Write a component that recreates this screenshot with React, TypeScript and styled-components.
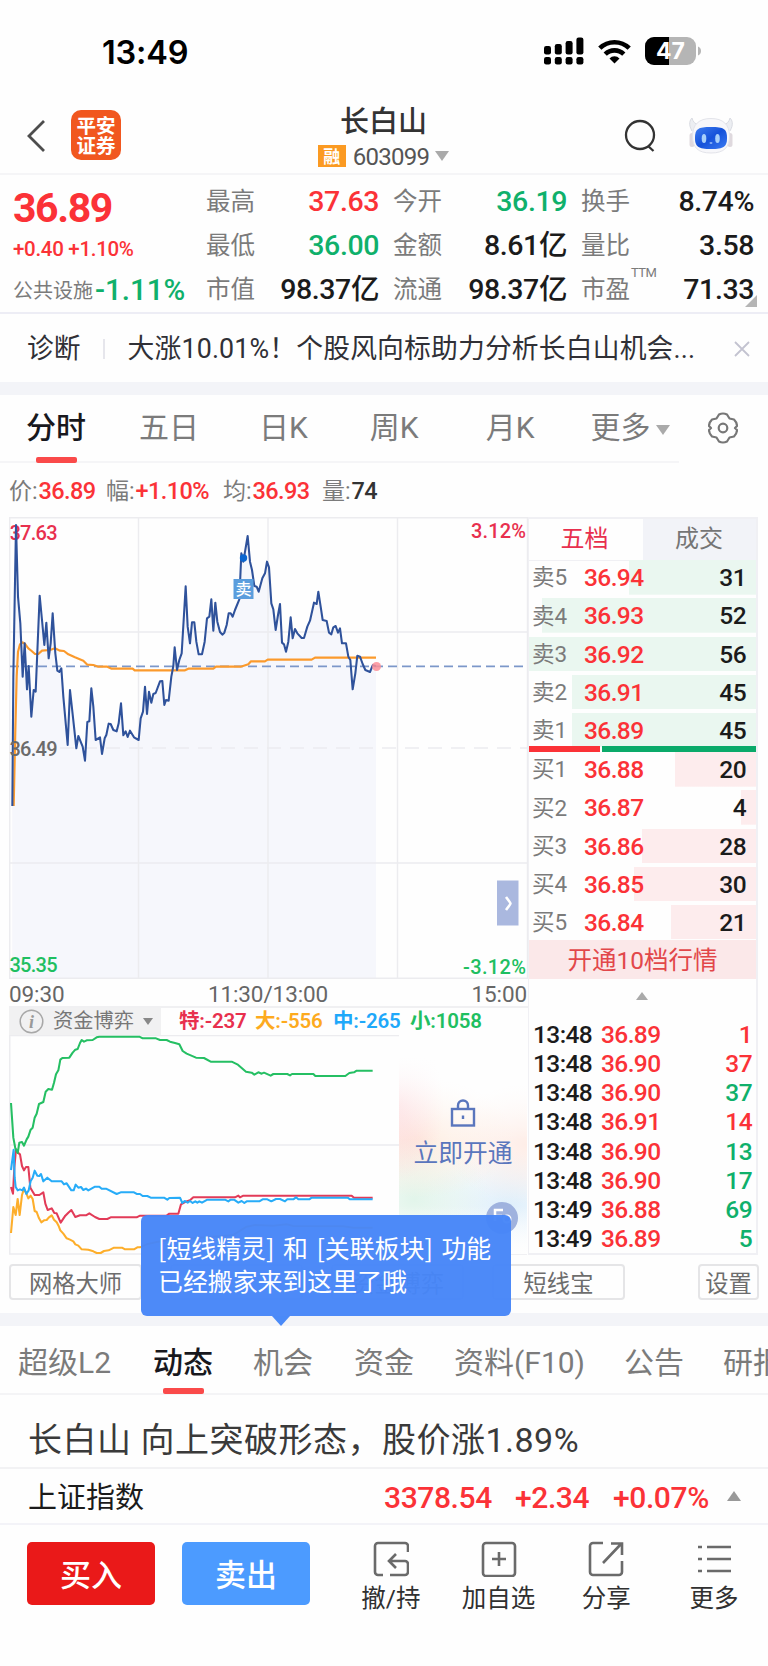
import React from "react";
import styled, { createGlobalStyle } from "styled-components";

const CJK = '"Noto Sans CJK SC"';
const RED = "#fb3237";
const GREEN = "#0fb06b";
const GREY = "#7b7b7b";
const INK = "#1b1b1b";
const LINE = "#f0f0f4";
const CRIMSON = "#e8304e";

const GlobalStyle = createGlobalStyle`
  *, *::before, *::after { box-sizing: border-box; }
  body { margin: 0; background: #fefefe; }
`;

const Screen = styled.div`
  width: 768px;
  height: 1666px;
  overflow: hidden;
  background: #fefefe;
  color: ${INK};
  font-family: Roboto, ${CJK}, sans-serif;
  line-height: 1.2;
  white-space: nowrap;
  display: flex;
  flex-direction: column;
`;

const StatusBar = styled.div`
  flex: none;
  height: 102px;
  padding: 0 66px 0 102px;
  display: flex;
  justify-content: space-between;
  align-items: center;
`;
const Clock = styled.div`
  font: 600 32.5px/1 Inter, sans-serif;
  letter-spacing: -0.2px;
  color: #000;
  padding-top: 5px;
`;
const StatusIcons = styled.div`
  display: flex;
  align-items: center;
  gap: 14px;
`;

const Header = styled.header`
  flex: none;
  height: 73px;
  display: grid;
  grid-template-columns: 24px 50px 1fr 64px 46px;
  padding: 0 34px 0 24px;
  align-items: start;
  border-bottom: 2px solid #f5f5f7;
`;
const Back = styled.svg`
  margin-top: 17px;
`;
const Logo = styled.div`
  margin: 8px 0 0 23px;
  width: 50px;
  height: 50px;
  border-radius: 10px;
  background: #f1571f;
  color: #fff;
  font: 700 19.5px/20px ${CJK}, sans-serif;
  display: flex;
  flex-direction: column;
  align-items: center;
  justify-content: center;
`;
const TitleBlock = styled.div`
  display: flex;
  flex-direction: column;
  align-items: center;
  padding-left: 45px;
`;
const Title = styled.div`
  font: 500 29px/36px ${CJK}, sans-serif;
  margin-top: -1px;
  color: #333;
`;
const CodeLine = styled.div`
  display: flex;
  align-items: center;
  height: 22px;
  margin-top: 8px;
  font-size: 24px;
  line-height: 32px;
  color: #555;
  letter-spacing: -0.7px;
`;
const CodeDigits = styled.span`
  padding-top: 2px;
  margin-right: 6px;
`;
const MarginBadge = styled.span`
  width: 28px;
  height: 22px;
  margin-right: 7px;
  background: #fb9a22;
  color: #fff;
  font: 700 17px/21px ${CJK}, sans-serif;
  letter-spacing: 0;
  text-align: center;
`;
const Caret = styled.span<{ $size?: number; $up?: boolean; $color?: string }>`
  display: inline-block;
  border: ${(p) => p.$size ?? 7}px solid transparent;
  border-${(p) => (p.$up ? "bottom" : "top")}: ${(p) => (p.$size ?? 7) * 1.45}px solid ${(p) => p.$color ?? "#aaa"};
  border-${(p) => (p.$up ? "top" : "bottom")}: 0;
`;
const PeriodCaret = styled(Caret)`
  vertical-align: 3px;
  margin-left: 6px;
`;
const PickerCaret = styled(Caret)`
  margin-left: 9px;
`;

const Quote = styled.section`
  flex: none;
  height: 139px;
  display: grid;
  grid-template-columns: 193px 173px 14px 174px 14px 173px;
  padding-left: 13px;
  border-bottom: 2px solid #ededf5;
  position: relative;
`;
const PriceBlock = styled.div`
  display: flex;
  flex-direction: column;
  color: ${RED};
`;
const LastPrice = styled.div`
  font-size: 41px;
  font-weight: 700;
  line-height: 48px;
  letter-spacing: -1.4px;
  margin-top: 9px;
`;
const Change = styled.div`
  font-size: 20.5px;
  font-weight: 500;
  line-height: 24px;
  letter-spacing: -0.3px;
  margin-top: 5px;
`;
const Sector = styled.div`
  display: flex;
  align-items: center;
  height: 30px;
  margin-top: 15px;
  color: ${GREY};
  font-size: 20px;
`;
const SectorPct = styled.span`
  color: ${GREEN};
  font-size: 29.5px;
  font-weight: 500;
  margin-left: 2px;
`;
const StatColumn = styled.div`
  display: grid;
  grid-template-rows: 44px 44px 44px;
  padding-top: 5px;
`;
const Spacer = styled.span``;
const Stat = styled.div`
  display: flex;
  align-items: center;
  justify-content: space-between;
`;
const StatLabel = styled.span`
  font-size: 24.5px;
  color: ${GREY};
  position: relative;
`;
const Superscript = styled.sup`
  position: absolute;
  left: 50px;
  top: -10px;
  font-size: 13px;
  letter-spacing: -0.5px;
  line-height: 16px;
`;
const StatValue = styled.span<{ $color?: string }>`
  font-size: 28.5px;
  font-weight: 500;
  letter-spacing: -0.4px;
  color: ${(p) => p.$color ?? INK};
`;
const Corner = styled.i`
  position: absolute;
  right: 11px;
  bottom: 5px;
  border: 6px solid transparent;
  border-right-color: #b5b5b5;
  border-bottom-color: #b5b5b5;
`;

const Diagnosis = styled.section`
  flex: none;
  height: 68px;
  padding: 2px 18px 0 27px;
  display: flex;
  align-items: center;
  font-size: 26.8px;
  color: #303036;
`;
const Divider = styled.i`
  width: 2px;
  height: 20px;
  background: #e6e6ec;
  margin: 0 23px 0 22px;
`;
const DiagnosisText = styled.span`
  flex: 1;
  letter-spacing: 0.15px;
`;

const Band = styled.div`
  flex: none;
  height: 13px;
  background: #f3f4f8;
`;

const PeriodTabs = styled.nav`
  flex: none;
  height: 68px;
  width: 679px;
  display: flex;
  border-bottom: 2px solid #f5f5f7;
`;
const PeriodBar = styled.div`
  display: flex;
`;
const Tab = styled.div<{ $left: number; $active?: boolean }>`
  position: relative;
  margin-left: ${(p) => p.$left}px;
  font-size: 30px;
  line-height: 66px;
  color: ${(p) => (p.$active ? "#18181d" : GREY)};
  font-weight: ${(p) => (p.$active ? 500 : 400)};
  &::after {
    content: "";
    display: ${(p) => (p.$active ? "block" : "none")};
    position: absolute;
    left: 50%;
    margin-left: -20px;
    bottom: -2px;
    width: 41px;
    height: 6px;
    border-radius: 2px;
    background: #fa4a4a;
  }
`;
const Gear = styled.svg`
  margin: 17px 0 0 29px;
`;

const Readout = styled.div`
  flex: none;
  height: 54px;
  display: flex;
  align-items: center;
  padding: 3px 0 0 9px;
  font-size: 23px;
  color: ${GREY};
`;
const ReadoutItem = styled.span<{ $width: number }>`
  width: ${(p) => p.$width}px;
`;
const ReadoutValue = styled.b<{ $color?: string }>`
  font-weight: 500;
  font-size: 23.5px;
  letter-spacing: -0.6px;
  margin-left: 1px;
  color: ${(p) => p.$color ?? RED};
`;

const Market = styled.main`
  flex: none;
  height: 737px;
  display: grid;
  grid-template-columns: 519px 230px;
  padding-left: 9px;
`;
const ChartColumn = styled.div`
  display: flex;
  flex-direction: column;
`;
const ChartSvg = styled.svg`
  display: block;
  flex: none;
`;
const TimeAxis = styled.div`
  height: 27px;
  display: flex;
  justify-content: space-between;
  align-items: center;
  font-size: 22.5px;
  letter-spacing: -0.1px;
  padding: 3px 1px 0 0;
  color: #666;
`;
const FundHeader = styled.div`
  height: 29px;
  display: flex;
  align-items: flex-start;
  line-height: 26px;
  border-top: 2px solid #f0f0f2;
`;
const FundPicker = styled.div`
  width: 152px;
  height: 27px;
  display: flex;
  align-items: center;
  padding: 0 0 1px 10px;
  background: #f1f1f2;
  color: #777;
  font-size: 20.3px;
`;
const Info = styled.svg`
  margin-right: 9px;
`;
const FundValue = styled.span<{ $color: string; $width: number; $left?: number }>`
  width: ${(p) => p.$width}px;
  margin-left: ${(p) => p.$left ?? 0}px;
  color: ${(p) => p.$color};
  font-size: 20.5px;
  font-weight: 600;
  letter-spacing: -0.2px;
`;
const FundChart = styled.div`
  position: relative;
  height: 220px;
`;
const LockPanel = styled.div`
  position: absolute;
  left: 390px;
  top: 0;
  width: 128px;
  height: 219px;
  display: flex;
  flex-direction: column;
  align-items: center;
  padding-top: 64px;
  gap: 12px;
  color: #5a76bd;
  font-size: 24.7px;
  background:
    linear-gradient(180deg, #fefefe 10%, rgba(254,254,254,0) 48%, rgba(254,254,254,0) 78%, #fefefe 100%),
    radial-gradient(ellipse 45px 75px at 0 32%, rgba(253,205,212,.65), rgba(253,205,212,0)),
    radial-gradient(ellipse 95px 60px at 15% 47%, rgba(254,229,212,.7), rgba(254,229,212,0)),
    radial-gradient(ellipse 80px 60px at 100% 50%, rgba(254,226,216,.6), rgba(254,226,216,0)),
    radial-gradient(ellipse 75px 65px at 12% 75%, rgba(214,241,226,.7), rgba(214,241,226,0)),
    radial-gradient(ellipse 90px 55px at 85% 78%, rgba(212,234,250,.75), rgba(212,234,250,0)),
    #fefefe;
`;
const FloatBadge = styled.div`
  position: absolute;
  left: 477px;
  top: 167px;
  width: 32px;
  height: 32px;
`;

const Book = styled.aside`
  border: solid ${LINE};
  border-width: 2px 2px 2px 1px;
  display: flex;
  flex-direction: column;
`;
const BookTabs = styled.div`
  height: 37.5px;
  display: grid;
  grid-template-columns: 114px 1fr;
`;
const BookTab = styled.div<{ $active?: boolean }>`
  text-align: center;
  font-size: 24px;
  line-height: 41px;
  padding-right: ${(p) => (p.$active ? 3 : 1)}px;
  border-bottom: 1px solid ${LINE};
  color: ${(p) => (p.$active ? CRIMSON : "#757575")};
  background: ${(p) => (p.$active ? "transparent" : "#f2f3f8")};
`;
const Level = styled.div<{ $bar: number; $tint: string }>`
  height: 34.4px;
  margin-top: 3.8px;
  display: grid;
  grid-template-columns: 52px 1fr auto;
  align-items: center;
  padding: 1px 10px 0 3px;
  font-size: 22.5px;
  color: ${GREY};
  background: linear-gradient(${(p) => p.$tint}, ${(p) => p.$tint}) right / ${(p) => p.$bar}px 100% no-repeat;
`;
const Figure = styled.span<{ $color?: string }>`
  font-size: 24.5px;
  font-weight: 500;
  letter-spacing: -0.6px;
  color: ${(p) => p.$color ?? INK};
`;
const RatioBar = styled.div`
  height: 6px;
  margin: -1px 0 -4px;
  display: grid;
  grid-template-columns: 71px 1fr;
  gap: 2px;
  z-index: 1;
  &::before { content: ""; background: ${RED}; }
  &::after { content: ""; background: #0aaa6a; }
`;
const DepthButton = styled.div`
  height: 39px;
  margin-top: 1px;
  background: #fbe8e9;
  color: #e2474a;
  text-align: center;
  font-size: 24.5px;
  line-height: 41px;
`;
const Collapse = styled.div`
  height: 40.5px;
  display: flex;
  justify-content: center;
  align-items: flex-start;
  padding: 13px 2px 0 0;
`;
const Trade = styled.div`
  height: 29.2px;
  display: grid;
  grid-template-columns: 68px 1fr auto;
  align-items: center;
  padding: 0 4px 0 4px;
`;

const ToolRow = styled.div`
  flex: none;
  height: 59px;
  display: flex;
  gap: 28px;
  padding: 10px 9px 0;
  position: relative;
`;
const ToolButton = styled.div<{ $width?: number; $last?: boolean }>`
  width: ${(p) => p.$width ?? 133}px;
  height: 36px;
  border: 2px solid #e5e5e7;
  border-radius: 4px;
  text-align: center;
  color: #6d6d6d;
  font-size: 23.3px;
  line-height: 37px;
  margin-left: ${(p) => (p.$last ? "auto" : 0)};
`;
const Tooltip = styled.div`
  position: absolute;
  left: 141px;
  top: -39px;
  width: 370px;
  height: 101px;
  border-radius: 6px;
  background: rgba(70, 134, 248, 0.965);
  color: #fff;
  font-family: ${CJK}, sans-serif;
  font-size: 24.9px;
  line-height: 33px;
  word-spacing: 3px;
  padding: 16px 0 0 17px;
  z-index: 2;
  &::after {
    content: "";
    position: absolute;
    left: 131px;
    top: 101px;
    border: 9px solid transparent;
    border-top: 10px solid #4a8af8;
    border-bottom: 0;
  }
`;

const SectionTabs = styled.nav`
  flex: none;
  height: 69px;
  display: flex;
  border-bottom: 2px solid #f4f4f6;
`;
const SectionTab = styled(Tab)`
  line-height: 73px;
  &::after { bottom: -1px; }
`;
const News = styled.div`
  flex: none;
  height: 74px;
  padding-left: 28px;
  font-size: 34px;
  line-height: 90px;
  letter-spacing: 0.5px;
  word-spacing: 0;
  color: #3a3a3a;
  border-bottom: 2px solid #f2f2f4;
`;
const IndexRow = styled.div`
  flex: none;
  height: 56px;
  display: flex;
  align-items: center;
  padding: 3px 27px 0 28px;
  font-size: 29px;
  border-bottom: 2px solid #f3f3f8;
`;
const IndexName = styled.span`
  flex: 1;
  padding-top: 1px;
`;
const IndexValue = styled.span<{ $width: number }>`
  width: ${(p) => p.$width}px;
  color: ${RED};
  font-size: 30px;
  font-weight: 500;
  letter-spacing: -0.4px;
`;
const IndexCaret = styled(Caret)`
  margin-bottom: 4px;
`;

const ActionBar = styled.footer`
  flex: 1;
  display: flex;
  padding: 17px 0 0 27px;
`;
const OrderButton = styled.div<{ $color: string }>`
  width: 128px;
  height: 63px;
  margin-right: 27px;
  border-radius: 5px;
  background: ${(p) => p.$color};
  color: #fff;
  font-size: 31px;
  font-weight: 500;
  line-height: 68px;
  text-align: center;
`;
const Actions = styled.div`
  display: grid;
  grid-template-columns: repeat(4, 107.7px);
`;
const Action = styled.div`
  display: flex;
  flex-direction: column;
  align-items: center;
  font-size: 24.5px;
  line-height: 38px;
  gap: 3px;
  color: #303030;
  & > svg { margin-top: -1px; }
`;
const SearchIcon = styled.svg`
  margin-top: 16px;
`;
const RobotIcon = styled.svg`
  margin-top: 13px;
`;

const toPath = (s: string) => "M" + s.split(" ").join("L");

const PRICE =
  "37,888 40,500 48,45 54,260 61,340 68,500 74,400 81,538 86,468 94,620 101,540 107,545 119,257 126,330 133,405 139,338 146,445 152,400 158,310 166,430 172,482 178,486 184,475 190,560 203,705 210,540 222,650 229,715 235,678 248,710 255,752 262,636 268,634 274,535 280,590 287,690 300,682 306,732 314,685 319,675 326,641 332,642 340,660 350,664 356,640 363,580 370,676 377,664 383,681 390,662 402,682 416,690 422,625 429,605 435,530 441,612 447,545 454,578 460,552 467,549 480,514 487,513 493,585 498,570 506,572 514,500 520,468 524,412 531,480 538,450 545,430 551,330 557,229 563,350 570,400 576,337 583,337 589,395 596,433 606,433 614,395 621,325 628,320 634,268 640,362 646,278 652,335 660,366 667,374 673,368 680,345 686,310 692,310 698,320 705,300 718,268 724,130 730,155 743,78 750,155 756,180 763,228 770,230 776,245 787,205 795,190 801,155 807,172 814,280 820,298 827,360 834,315 840,282 846,398 852,403 858,425 865,395 872,322 878,385 885,357 892,370 905,384 912,384 922,350 930,332 942,278 950,282 955,245 962,290 968,330 980,333 987,368 994,373 1000,352 1007,348 1014,368 1020,355 1026,400 1038,400 1045,440 1051,450 1058,538 1066,490 1072,437 1080,440 1088,462 1096,480 1110,486 1118,466 1128,468";
const AVERAGE =
  "41,888 46,660 50,500 54,425 60,403 68,397 75,402 85,415 95,423 105,432 115,432 126,422 150,420 165,415 180,422 192,423 205,433 225,442 250,452 262,464 280,465 295,470 322,470 335,476 398,476 404,481 555,481 565,476 640,476 648,470 722,470 745,463 753,454 795,454 803,449 935,449 945,443 1128,443";

const SMALL =
  "33,246 40,350 46,382 53,396 58,365 66,363 72,374 80,355 85,347 92,326 98,320 104,290 110,278 117,249 130,243 137,212 145,204 156,206 162,185 168,160 175,148 181,116 187,111 208,110 218,95 226,86 233,84 240,66 245,57 252,62 260,58 278,57 290,49 298,47 418,47 428,52 468,52 480,57 500,57 510,62 525,66 538,70 548,90 560,98 588,110 612,111 632,122 695,122 712,130 738,152 755,155 763,161 775,154 785,158 792,155 812,164 820,159 862,159 870,163 876,159 940,159 946,165 1036,165 1048,156 1062,154 1070,149 1118,149";
const EXTRA =
  "33,498 39,518 43,440 48,385 56,397 60,400 66,435 72,448 78,438 85,438 91,500 104,522 118,522 130,514 136,548 143,567 155,562 163,576 170,577 182,605 196,584 205,575 214,567 226,588 240,583 258,583 268,577 285,588 298,594 322,594 332,589 410,589 420,584 500,584 508,578 535,578 543,550 555,543 570,538 580,529 705,529 715,524 720,529 730,524 1055,524 1062,530 1118,530";
const MEDIUM =
  "33,447 41,386 44,470 47,498 53,508 60,505 67,508 72,500 79,519 86,508 92,480 98,470 104,449 112,464 118,465 123,459 130,481 142,470 155,481 185,481 192,490 200,487 214,508 221,508 227,491 235,500 243,498 250,507 258,503 265,508 285,497 298,497 305,503 318,503 350,519 362,514 402,514 410,519 420,519 428,525 442,525 452,530 492,530 502,536 508,531 540,530 547,546 554,540 563,545 570,540 578,546 586,541 592,545 598,541 606,545 622,536 675,536 685,541 692,536 702,536 715,545 725,540 733,546 740,541 778,541 788,535 802,535 814,541 828,534 840,534 855,541 862,535 880,535 888,529 895,535 928,535 935,530 1043,530 1050,535 1118,535";
const LARGE =
  "33,636 40,558 47,582 53,534 59,582 66,522 72,503 78,515 85,532 92,524 98,534 104,570 110,573 117,592 124,604 132,598 140,597 146,590 155,583 162,596 170,604 176,615 181,628 190,638 200,652 210,656 220,661 226,670 235,674 245,685 265,686 280,691 290,696 302,696 312,690 326,688 342,680 366,680 375,685 402,685 412,679 420,679 440,670 470,663 520,655 600,650 700,642 740,617 765,612 820,614 860,610 880,615 1030,616 1060,620 1118,620";

const SELLS = [
  ["卖5", "36.94", "31", 127],
  ["卖4", "36.93", "52", 214],
  ["卖3", "36.92", "56", 229],
  ["卖2", "36.91", "45", 184],
  ["卖1", "36.89", "45", 184],
] as const;
const BUYS = [
  ["买1", "36.88", "20", 81],
  ["买2", "36.87", "4", 15],
  ["买3", "36.86", "28", 114],
  ["买4", "36.85", "30", 122],
  ["买5", "36.84", "21", 85],
] as const;
const TRADES = [
  ["13:48", "36.89", "1", RED],
  ["13:48", "36.90", "37", RED],
  ["13:48", "36.90", "37", GREEN],
  ["13:48", "36.91", "14", RED],
  ["13:48", "36.90", "13", GREEN],
  ["13:48", "36.90", "17", GREEN],
  ["13:49", "36.88", "69", GREEN],
  ["13:49", "36.89", "5", GREEN],
] as const;
const STATS: [string, string, string?][][] = [
  [["最高", "37.63", RED], ["最低", "36.00", GREEN], ["市值", "98.37亿"]],
  [["今开", "36.19", GREEN], ["金额", "8.61亿"], ["流通", "98.37亿"]],
  [["换手", "8.74%"], ["量比", "3.58"], ["市盈", "71.33"]],
];

function StatusGlyphs() {
  return (
    <StatusIcons>
      <svg width="40" height="28" viewBox="0 0 40 28">
        {[9, 7, 4, 0.5].map((y, i) => (
          <g key={i}>
            <rect x={i * 10.8} y={y} width="7" height={17.5 - y} rx="2.2" />
            <rect x={i * 10.8} y="20" width="7" height="7.5" rx="2.2" />
          </g>
        ))}
      </svg>
      <svg width="33" height="25" viewBox="0 0 33 25" fill="none" stroke="#000" strokeWidth="4.6">
        <path d="M1.8 9.2a21 21 0 0 1 29.4 0" />
        <path d="M7.2 15.2a13.2 13.2 0 0 1 18.6 0" />
        <path d="M16.5 24.6l-5-5.2a7 7 0 0 1 10 0z" fill="#000" stroke="none" />
      </svg>
      <svg width="57" height="28" viewBox="0 0 57 28">
        <clipPath id="cell"><rect width="51" height="28" rx="9" /></clipPath>
        <g clipPath="url(#cell)">
          <rect width="51" height="28" fill="#b5b5b5" />
          <rect width="24" height="28" />
        </g>
        <path d="M53 9.5c4 1 4 8 0 9z" fill="#b5b5b5" />
        <text x="25.5" y="22" textAnchor="middle" fill="#fff" fontFamily="Inter, sans-serif" fontWeight="700" fontSize="23">47</text>
      </svg>
    </StatusIcons>
  );
}

function Robot() {
  return (
    <RobotIcon width="46" height="40" viewBox="0 0 46 40">
      <defs>
        <linearGradient id="visor" x1="0" y1="0" x2="1" y2="1">
          <stop offset="0" stopColor="#3f7df0" />
          <stop offset=".5" stopColor="#1552da" />
          <stop offset="1" stopColor="#3b7bf2" />
        </linearGradient>
      </defs>
      <path d="M4 16C0 9 2 5 4 3c1 4 3 6 7 7M42 16c4-7 2-11 0-13-1 4-3 6-7 7" fill="#eceef2" stroke="#d9dbe2" />
      <rect x="1.5" y="18" width="5" height="14" rx="2.5" fill="#dfd9de" />
      <rect x="39.5" y="18" width="5" height="14" rx="2.5" fill="#dfd9de" />
      <path d="M23 3.5c12 0 18.5 6 18.5 17.500 0 11-5 17-18.500 17S4.500 32 4.500 21C4.500 9.500 11 3.500 23 3.500z" fill="#f7f7fa" stroke="#e3e4ea" />
      <path d="M23 12c13 0 16 2 16 11 0 8.500-3 11-16 11S7 31.500 7 23c0-9 3-11 16-11z" fill="url(#visor)" />
      <ellipse cx="16" cy="23.5" rx="2.3" ry="4.5" fill="#a8d0fa" />
      <ellipse cx="29.5" cy="23.5" rx="2.3" ry="4.5" fill="#a8d0fa" />
      <path d="M21.8 27.6q1.2 1.2 2.4 0" stroke="#b9d9ff" fill="none" strokeWidth="1.3" />
    </RobotIcon>
  );
}

function PriceChart() {
  return (
    <ChartSvg width="519" height="462" viewBox="9 517 519 462" fontFamily="Roboto, sans-serif" fontWeight="500" fontSize="20">
      <text x="526" y="538" fill={CRIMSON} textAnchor="end" textLength="55">3.12%</text>
      <text x="9.5" y="540" fill={CRIMSON} textLength="48">37.63</text>
      <g transform="translate(0 510) scale(.33333)">
        <path d={toPath(PRICE) + "L1128,1404L37,1404Z"} fill="#eef0fa" fillOpacity=".55" />
      </g>
      <g stroke="#ececef" strokeWidth="1.4" fill="none">
        <path d="M9.7 978.3V517.7H527.5V978.3ZM138.5 517V978M268 517V978M397.5 517V978M9 632H527M9 863H527" />
        <path d="M14 748H527" strokeDasharray="14 9" />
      </g>
      <path d="M10 666.3H527" stroke="#7c97c9" strokeWidth="1.8" strokeDasharray="9 5" />
      <g transform="translate(0 510) scale(.33333)" fill="none" strokeLinejoin="round">
        <path d={toPath(AVERAGE)} stroke="#fb9a2c" strokeWidth="6.5" />
        <path d={toPath(PRICE)} stroke="#2f529b" strokeWidth="6.2" />
      </g>
      <text x="9.5" y="756" fill="#6b6b6b" textLength="48">36.49</text>
      <text x="9.5" y="972" fill="#1fbf61" textLength="48">35.35</text>
      <text x="526" y="973.5" fill="#1fbf61" textAnchor="end" textLength="63">-3.12%</text>
      <circle cx="376.5" cy="666.5" r="4.5" fill="#fb8f98" opacity=".85" />
      <circle cx="243.5" cy="558" r="3.7" fill="#0a66d0" />
      <rect x="233.5" y="579" width="20" height="20" fill="#5a9ddd" />
      <text x="243.5" y="595" fill="#fff" textAnchor="middle" fontFamily="Noto Sans CJK SC, sans-serif" fontSize="16" fontWeight="500">卖</text>
      <rect x="497" y="880.5" width="21.5" height="45" fill="#aab8df" />
      <path d="M506 897q4.5 6 4.5 6.5t-4.5 6.5" fill="none" stroke="#fff" strokeWidth="2.6" />
    </ChartSvg>
  );
}

function FundLines() {
  return (
    <ChartSvg width="519" height="220" viewBox="9 1034 519 220">
      <path d="M9.7 1034V1253H527M9 1144H400M9 1034.5H527" stroke="#ececef" strokeWidth="1.5" fill="none" />
      <g transform="translate(0 1020) scale(.33333)" fill="none" strokeWidth="6.2" strokeLinejoin="round">
        <path d={toPath(LARGE)} stroke="#fdae2b" />
        <path d={toPath(EXTRA)} stroke="#e23b58" />
        <path d={toPath(MEDIUM)} stroke="#27acf8" />
        <path d={toPath(SMALL)} stroke="#25bf63" />
      </g>
    </ChartSvg>
  );
}

const actionIcon = { width: 36, height: 36, viewBox: "0 0 36 36", fill: "none", stroke: "#6a6a6a", strokeWidth: 2.6 };

export default function App() {
  return (
    <Screen>
      <GlobalStyle />
      <StatusBar>
        <Clock>13:49</Clock>
        <StatusGlyphs />
      </StatusBar>

      <Header>
        <Back width="24" height="34" viewBox="0 0 24 34" fill="none" stroke="#4d4d4d" strokeWidth="2.8">
          <path d="M20 2L5 17l15 15" />
        </Back>
        <Logo><span>平安</span><span>证券</span></Logo>
        <TitleBlock>
          <Title>长白山</Title>
          <CodeLine>
            <MarginBadge>融</MarginBadge>
            <CodeDigits>603099</CodeDigits>
            <Caret />
          </CodeLine>
        </TitleBlock>
        <SearchIcon width="34" height="36" viewBox="0 0 34 36" fill="none" stroke="#333" strokeWidth="2.3">
          <circle cx="16" cy="17" r="14" />
          <path d="M24 28l5.5 5" />
        </SearchIcon>
        <Robot />
      </Header>

      <Quote>
        <PriceBlock>
          <LastPrice>36.89</LastPrice>
          <Change>+0.40 +1.10%</Change>
          <Sector>公共设施<SectorPct>-1.11%</SectorPct></Sector>
        </PriceBlock>
        {STATS.map((column, i) => (
          <React.Fragment key={i}>
            {i > 0 && <Spacer />}
            <StatColumn>
              {column.map(([label, value, color]) => (
                <Stat key={label}>
                  <StatLabel>{label}{label === "市盈" && <Superscript>TTM</Superscript>}</StatLabel>
                  <StatValue $color={color}>{value}</StatValue>
                </Stat>
              ))}
            </StatColumn>
          </React.Fragment>
        ))}
        <Corner />
      </Quote>

      <Diagnosis>
        诊断
        <Divider />
        <DiagnosisText>大涨10.01%！个股风向标助力分析长白山机会...</DiagnosisText>
        <svg width="16" height="16" viewBox="0 0 16 16" stroke="#c3c3d0" strokeWidth="1.8">
          <path d="M1 1l14 14M15 1L1 15" />
        </svg>
      </Diagnosis>
      <Band />

      <PeriodBar>
        <PeriodTabs>
          <Tab $left={26} $active>分时</Tab>
          <Tab $left={53}>五日</Tab>
          <Tab $left={60}>日K</Tab>
          <Tab $left={62}>周K</Tab>
          <Tab $left={67}>月K</Tab>
          <Tab $left={56}>更多<PeriodCaret $size={7.5} /></Tab>
        </PeriodTabs>
        <Gear width="30" height="32" viewBox="0 0 30 32" fill="none" stroke="#777" strokeWidth="2.2" strokeLinejoin="round">
          <path d="M11 2.5q4-2 8 0l2.5 4 4.5 1q3 3 3 6.5l-2 2 2 2q0 3.5-3 6.5l-4.5 1-2.5 4q-4 2-8 0l-2.5-4-4.5-1q-3-3-3-6.5l2-2-2-2q0-3.5 3-6.5l4.5-1z" />
          <circle cx="15" cy="16" r="4.3" />
        </Gear>
      </PeriodBar>

      <Readout>
        <ReadoutItem $width={97}>价:<ReadoutValue>36.89</ReadoutValue></ReadoutItem>
        <ReadoutItem $width={117}>幅:<ReadoutValue>+1.10%</ReadoutValue></ReadoutItem>
        <ReadoutItem $width={99}>均:<ReadoutValue>36.93</ReadoutValue></ReadoutItem>
        <ReadoutItem $width={80}>量:<ReadoutValue $color="#333">74</ReadoutValue></ReadoutItem>
      </Readout>

      <Market>
        <ChartColumn>
          <PriceChart />
          <TimeAxis><span>09:30</span><span>11:30/13:00</span><span>15:00</span></TimeAxis>
          <FundHeader>
            <FundPicker>
              <Info width="25" height="25" viewBox="0 0 25 25">
                <circle cx="12.5" cy="12.5" r="11.3" fill="none" stroke="#a8a8a8" strokeWidth="1.5" />
                <text x="12.5" y="18.5" textAnchor="middle" fontFamily="Liberation Serif, serif" fontStyle="italic" fontWeight="700" fontSize="18" fill="#999">i</text>
              </Info>
              资金博弈<PickerCaret $size={5} $color="#888" />
            </FundPicker>
            <FundValue $left={18} $width={76} $color="#e8304e">特:-237</FundValue>
            <FundValue $width={78} $color="#fdaa1e">大:-556</FundValue>
            <FundValue $width={77} $color="#1ea8fa">中:-265</FundValue>
            <FundValue $width={80} $color="#1fbf61">小:1058</FundValue>
          </FundHeader>
          <FundChart>
            <FundLines />
            <LockPanel>
              <svg width="26" height="28" viewBox="0 0 26 28" fill="none" stroke="#5a76bd" strokeWidth="2.4">
                <rect x="2" y="10" width="22" height="16.5" />
                <path d="M8 10V6.500a5 5 0 0 1 10 0V10M13 16.500v3.500" />
              </svg>
              立即开通
            </LockPanel>
            <FloatBadge>
              <svg width="32" height="32" viewBox="0 0 32 32">
                <circle cx="16" cy="16" r="16" fill="#9fb2de" />
                <path d="M17 8H9v11M9 14h7" stroke="#fff" strokeWidth="2.5" fill="none" />
                <circle cx="21" cy="17" r="3.5" stroke="#fff" strokeWidth="2" fill="none" />
              </svg>
            </FloatBadge>
          </FundChart>
        </ChartColumn>

        <Book>
          <BookTabs>
            <BookTab $active>五档</BookTab>
            <BookTab>成交</BookTab>
          </BookTabs>
          {SELLS.map(([label, price, qty, bar]) => (
            <Level key={label} $bar={bar} $tint="#eaf7f0">
              <span>{label}</span><Figure $color={RED}>{price}</Figure><Figure>{qty}</Figure>
            </Level>
          ))}
          <RatioBar />
          {BUYS.map(([label, price, qty, bar]) => (
            <Level key={label} $bar={bar} $tint="#fdeced">
              <span>{label}</span><Figure $color={RED}>{price}</Figure><Figure>{qty}</Figure>
            </Level>
          ))}
          <DepthButton>开通10档行情</DepthButton>
          <Collapse><Caret $size={6} $up /></Collapse>
          {TRADES.map(([time, price, qty, color], i) => (
            <Trade key={i}>
              <Figure>{time}</Figure><Figure $color={RED}>{price}</Figure><Figure $color={color}>{qty}</Figure>
            </Trade>
          ))}
        </Book>
      </Market>

      <ToolRow>
        <ToolButton>网格大师</ToolButton>
        <ToolButton />
        <ToolButton>资金博弈</ToolButton>
        <ToolButton>短线宝</ToolButton>
        <ToolButton $width={61} $last>设置</ToolButton>
        <Tooltip>
          <div>[短线精灵] 和 [关联板块] 功能</div>
          <div>已经搬家来到这里了哦</div>
        </Tooltip>
      </ToolRow>
      <Band />

      <SectionTabs>
        <SectionTab $left={18}>超级L2</SectionTab>
        <SectionTab $left={42} $active>动态</SectionTab>
        <SectionTab $left={40}>机会</SectionTab>
        <SectionTab $left={41}>资金</SectionTab>
        <SectionTab $left={40}>资料(F10)</SectionTab>
        <SectionTab $left={39}>公告</SectionTab>
        <SectionTab $left={39}>研报</SectionTab>
      </SectionTabs>
      <News>长白山 向上突破形态，股价涨1.89%</News>
      <IndexRow>
        <IndexName>上证指数</IndexName>
        <IndexValue $width={131}>3378.54</IndexValue>
        <IndexValue $width={98}>+2.34</IndexValue>
        <IndexValue $width={114}>+0.07%</IndexValue>
        <IndexCaret $size={7.5} $up $color="#999" />
      </IndexRow>

      <ActionBar>
        <OrderButton $color="#ea1919">买入</OrderButton>
        <OrderButton $color="#4c9bff">卖出</OrderButton>
        <Actions>
          <Action>
            <svg {...actionIcon}>
              <path d="M35 11V5a3 3 0 0 0-3-3H5a3 3 0 0 0-3 3v26a3 3 0 0 0 3 3h5M17 34h15a3 3 0 0 0 3-3V23a3 3 0 0 0-3-3H17M23 13l-7 7 7 7" />
            </svg>
            撤/持
          </Action>
          <Action>
            <svg {...actionIcon}>
              <rect x="2" y="2" width="32" height="33" rx="3" />
              <path d="M18 11v14M11 18h14" />
            </svg>
            加自选
          </Action>
          <Action>
            <svg {...actionIcon}>
              <path d="M15 2H5a3 3 0 0 0-3 3v26a3 3 0 0 0 3 3h26a3 3 0 0 0 3-3V20M15 22L33 3M23 2.5h11V14" />
            </svg>
            分享
          </Action>
          <Action>
            <svg {...actionIcon}>
              <path d="M11 6h24M11 18h24M11 30h24M2 6h4M2 18h4M2 30h4" />
            </svg>
            更多
          </Action>
        </Actions>
      </ActionBar>
    </Screen>
  );
}
